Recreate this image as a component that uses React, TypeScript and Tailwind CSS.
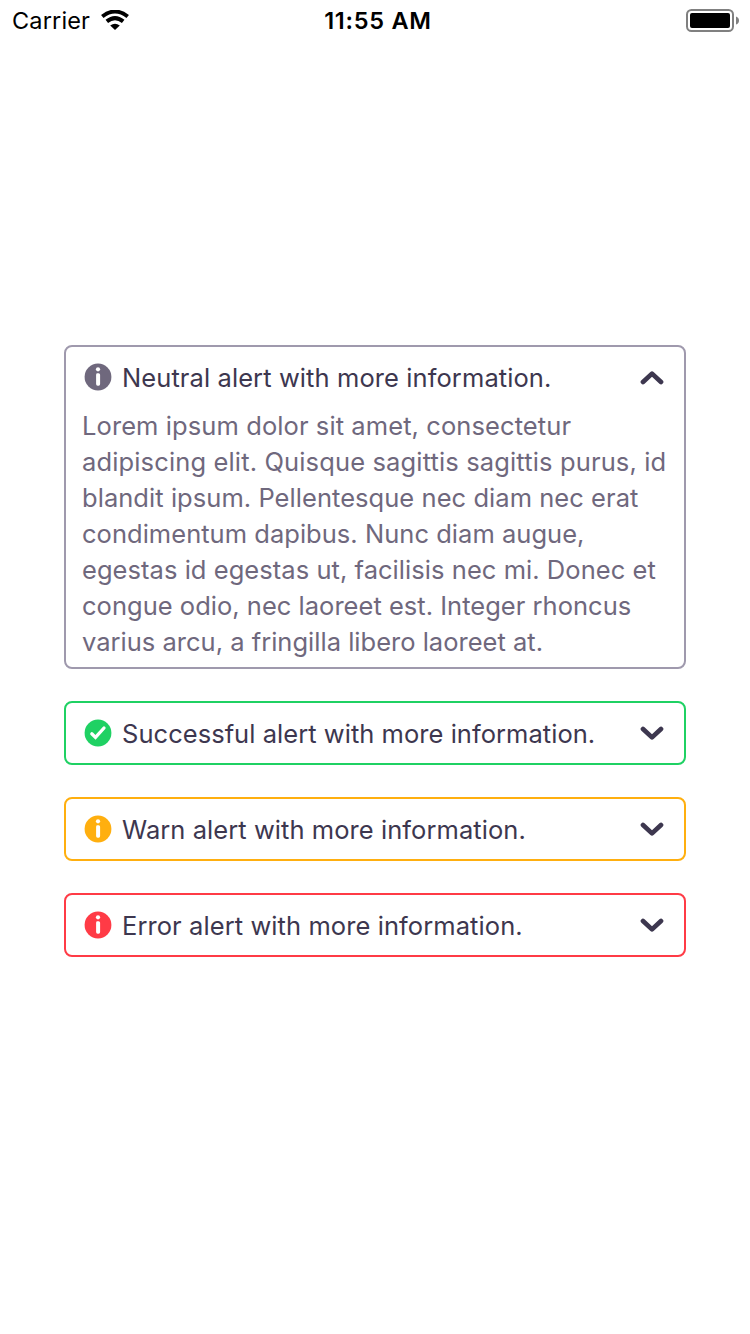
import React, { useState } from "react";

function InfoIcon() {
  return (
    <svg className="h-7 w-7" viewBox="0 0 28 28">
      <circle cx="14" cy="14" r="13.4" fill="currentColor" />
      <circle cx="14" cy="6.3" r="2.1" fill="white" />
      <path d="M13 10.2h1.6q1.5 0 1.5 1.5v9.4q0 1.6-1.5 1.6h-1q-1.5 0-1.5-1.6v-9q0-1.9.9-1.9z" fill="white" />
    </svg>
  );
}

function CheckIcon() {
  return (
    <svg className="h-7 w-7" viewBox="0 0 28 28">
      <circle cx="14" cy="14" r="13.4" fill="currentColor" />
      <path d="M7.8 14.8l3.7 3.6 8.5-9.4" fill="none" stroke="white" strokeWidth="3.3" strokeLinecap="round" strokeLinejoin="miter" />
    </svg>
  );
}

function Chevron({ up }: { up: boolean }) {
  return (
    <svg className="h-6 w-6" viewBox="0 0 24 24" fill="none" stroke="#3d374f" strokeWidth="4.7" strokeLinecap="round" strokeLinejoin="round">
      <path d={up ? "M3 17L12 8.6L21 17" : "M3 8L12 16.4L21 8"} />
    </svg>
  );
}

type AlertProps = {
  title: string;
  tracking: string;
  border: string;
  tone: string;
  success?: boolean;
  initiallyOpen?: boolean;
  children?: React.ReactNode;
};

function Alert({ title, tracking, border, tone, success, initiallyOpen = false, children }: AlertProps) {
  const [open, setOpen] = useState(initiallyOpen);
  return (
    <section className={"rounded-lg border-2 " + border}>
      <button type="button" aria-expanded={open} onClick={() => setOpen(!open)} className="flex h-[60px] w-full items-center pl-[18px] pr-5 text-left">
        <span className={tone}>{success ? <CheckIcon /> : <InfoIcon />}</span>
        <span className={"ml-2.5 flex-1 whitespace-nowrap pt-0.5 text-[25.5px] leading-9 text-[#3d374f] " + tracking}>{title}</span>
        <Chevron up={open} />
      </button>
      {open && children}
    </section>
  );
}

const lines = [
  { text: "Lorem ipsum dolor sit amet, consectetur", tracking: "tracking-[0.09px]" },
  { text: "adipiscing elit. Quisque sagittis sagittis purus, id", tracking: "tracking-[0.14px]" },
  { text: "blandit ipsum. Pellentesque nec diam nec erat", tracking: "tracking-[0.05px]" },
  { text: "condimentum dapibus. Nunc diam augue,", tracking: "tracking-[0.03px]" },
  { text: "egestas id egestas ut, facilisis nec mi. Donec et", tracking: "tracking-[0.05px]" },
  { text: "congue odio, nec laoreet est. Integer rhoncus", tracking: "tracking-[0.02px]" },
  { text: "varius arcu, a fringilla libero laoreet at.", tracking: "tracking-[0.01px]" },
];

function StatusBar() {
  return (
    <header className="grid h-10 grid-cols-3 items-center pl-3 pr-[11px] text-black">
      <div className="flex items-center gap-[11px]">
        <span className="pt-0.5 text-[23.5px] leading-9 tracking-[0.15px]">Carrier</span>
        <svg className="h-5 w-7" viewBox="0 0 28 20" fill="none" stroke="black">
          <path d="M1.3 6.5Q14-3.4 26.7 6.5" strokeWidth="4" />
          <path d="M5.8 11.4Q14 4.8 22.2 11.4" strokeWidth="4" />
          <path d="M14 20L9.2 15.5Q14 11.8 18.8 15.5Z" fill="black" stroke="none" />
        </svg>
      </div>
      <span className="pl-[5px] pt-0.5 text-center text-[23.5px] font-semibold leading-9 tracking-[0.75px]">11:55 AM</span>
      <svg className="h-6 w-[54px] justify-self-end" viewBox="0 0 54 24">
        <rect x="2" y="2" width="46" height="21" rx="4.5" fill="none" stroke="#808080" strokeWidth="2" />
        <rect x="5" y="5" width="40" height="15" rx="2" fill="black" />
        <path d="M51 8.5q3 1 3 4t-3 4z" fill="#808080" />
      </svg>
    </header>
  );
}

export default function App() {
  return (
    <div className="flex h-[1334px] w-[750px] flex-col bg-white font-['Inter',sans-serif]">
      <StatusBar />
      <main className="flex flex-col gap-8 px-16 pt-[305px]">
        <Alert title="Neutral alert with more information." tracking="tracking-[0.09px]" border="border-[#9f99ad]" tone="text-[#6f687d]" initiallyOpen>
          <div className="pb-[7px] pl-4 pt-px text-[25.5px] leading-9 text-[#6f687d]">
            {lines.map((l) => (
              <p key={l.text} className={"whitespace-nowrap " + l.tracking}>{l.text}</p>
            ))}
          </div>
        </Alert>
        <Alert title="Successful alert with more information." tracking="tracking-[0.04px]" border="border-[#1fd163]" tone="text-[#1fd163]" success />
        <Alert title="Warn alert with more information." tracking="tracking-[0.06px]" border="border-[#ffaf0f]" tone="text-[#ffaf0f]" />
        <Alert title="Error alert with more information." tracking="tracking-[0.08px]" border="border-[#ff3b46]" tone="text-[#ff3b46]" />
      </main>
    </div>
  );
}
